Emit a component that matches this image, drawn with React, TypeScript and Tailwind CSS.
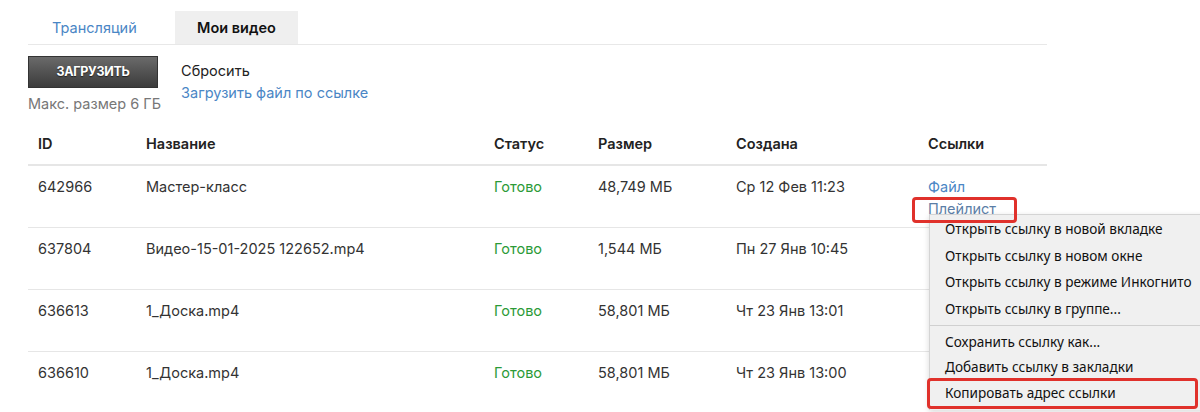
const ROWS = [
  { id: "642966", name: "Мастер-класс", size: "48,749 МБ", created: "Ср 12 Фев 11:23", links: true },
  { id: "637804", name: "Видео-15-01-2025 122652.mp4", size: "1,544 МБ", created: "Пн 27 Янв 10:45", links: false },
  { id: "636613", name: "1_Доска.mp4", size: "58,801 МБ", created: "Чт 23 Янв 13:01", links: false },
  { id: "636610", name: "1_Доска.mp4", size: "58,801 МБ", created: "Чт 23 Янв 13:00", links: false },
];

const MENU_TOP = [
  "Открыть ссылку в новой вкладке",
  "Открыть ссылку в новом окне",
  "Открыть ссылку в режиме Инкогнито",
  "Открыть ссылку в группе...",
];

const MENU_BOTTOM = ["Сохранить ссылку как...", "Добавить ссылку в закладки"];

/* ── Browser context menu over the links column ── */
function ContextMenu() {
  return (
    <div className="absolute left-[929px] top-[214px] w-[290px] bg-[#f0f0f0] border-l border-t border-[#d4d4d4] pt-[1px] pb-[4px] shadow-[0_2px_6px_rgba(0,0,0,0.15)] font-['Noto_Sans',sans-serif] text-[13.6px] text-[#111]">
      {MENU_TOP.map((t) => (
        <div key={t} className="h-[26.5px] flex items-center pl-[15px]">
          {t}
        </div>
      ))}
      <div className="my-[3px] h-px bg-[#d0d0d0]" />
      {MENU_BOTTOM.map((t) => (
        <div key={t} className="h-[25.5px] flex items-center pl-[15px]">
          {t}
        </div>
      ))}
      <div className="relative h-[26px] flex items-center pl-[15px]">
        Копировать адрес ссылки
        <div className="absolute left-[-3px] top-[-2px] w-[271px] h-[31px] border-[3px] border-[#e0312b] rounded-[4px]" />
      </div>
    </div>
  );
}

export default function App() {
  return (
    <div className="relative w-[1200px] h-[412px] overflow-hidden bg-white font-['Inter',sans-serif] text-[14.5px] text-[#222]">
      <div className="w-[1019px] ml-[28px]">
        {/* Tabs */}
        <div className="flex pt-[11px] border-b border-[#e8e8e8]">
          <div className="w-[147px] h-[33px] flex items-center pl-[24px] text-[#4a86c5]">Трансляций</div>
          <div className="w-[123px] h-[33px] flex items-center justify-center bg-[#efefef] font-semibold text-[#111]">
            Мои видео
          </div>
        </div>

        {/* Upload controls */}
        <div className="flex mt-[11px] gap-[20px]">
          <div>
            <button className="w-[130px] h-[32px] bg-gradient-to-b from-[#6a6a6a] to-[#3c3c3c] border border-[#333] text-white text-[12.5px] font-bold uppercase tracking-tight [text-shadow:0_1px_1px_rgba(0,0,0,0.6)]">
              Загрузить
            </button>
            <div className="mt-[5px] text-[#777]">Макс. размер 6 ГБ</div>
          </div>
          <div className="pt-[4px] leading-[22px]">
            <div className="text-[#222]">Сбросить</div>
            <div className="text-[#4a86c5]">Загрузить файл по ссылке</div>
          </div>
        </div>

        {/* Table */}
        <div className="mt-[9px]">
          <div className="flex h-[42px] items-center font-semibold text-[#222] border-b-2 border-[#e6e6e6]">
            <div className="w-[118px] pl-[10px]">ID</div>
            <div className="w-[348px]">Название</div>
            <div className="w-[104px]">Статус</div>
            <div className="w-[138px]">Размер</div>
            <div className="w-[192px]">Создана</div>
            <div className="flex-1">Ссылки</div>
          </div>
          {ROWS.map((r) => (
            <div key={r.id} className="flex h-[62px] pt-[10px] border-b border-[#e6e6e6] text-[#333] leading-[22px]">
              <div className="w-[118px] pl-[10px]">{r.id}</div>
              <div className="w-[348px]">{r.name}</div>
              <div className="w-[104px] text-[#2c9a37]">Готово</div>
              <div className="w-[138px]">{r.size}</div>
              <div className="w-[192px]">{r.created}</div>
              <div className="flex-1 text-[#4a86c5]">
                {r.links && (
                  <>
                    <div>Файл</div>
                    <div className="relative z-10 inline-block text-[#5b7ea6]">
                      Плейлист
                      <div className="absolute left-[-16px] top-[-1px] w-[105px] h-[26px] border-[3px] border-[#e0312b] rounded-[4px]" />
                    </div>
                  </>
                )}
              </div>
            </div>
          ))}
        </div>
      </div>
      <ContextMenu />
    </div>
  );
}
